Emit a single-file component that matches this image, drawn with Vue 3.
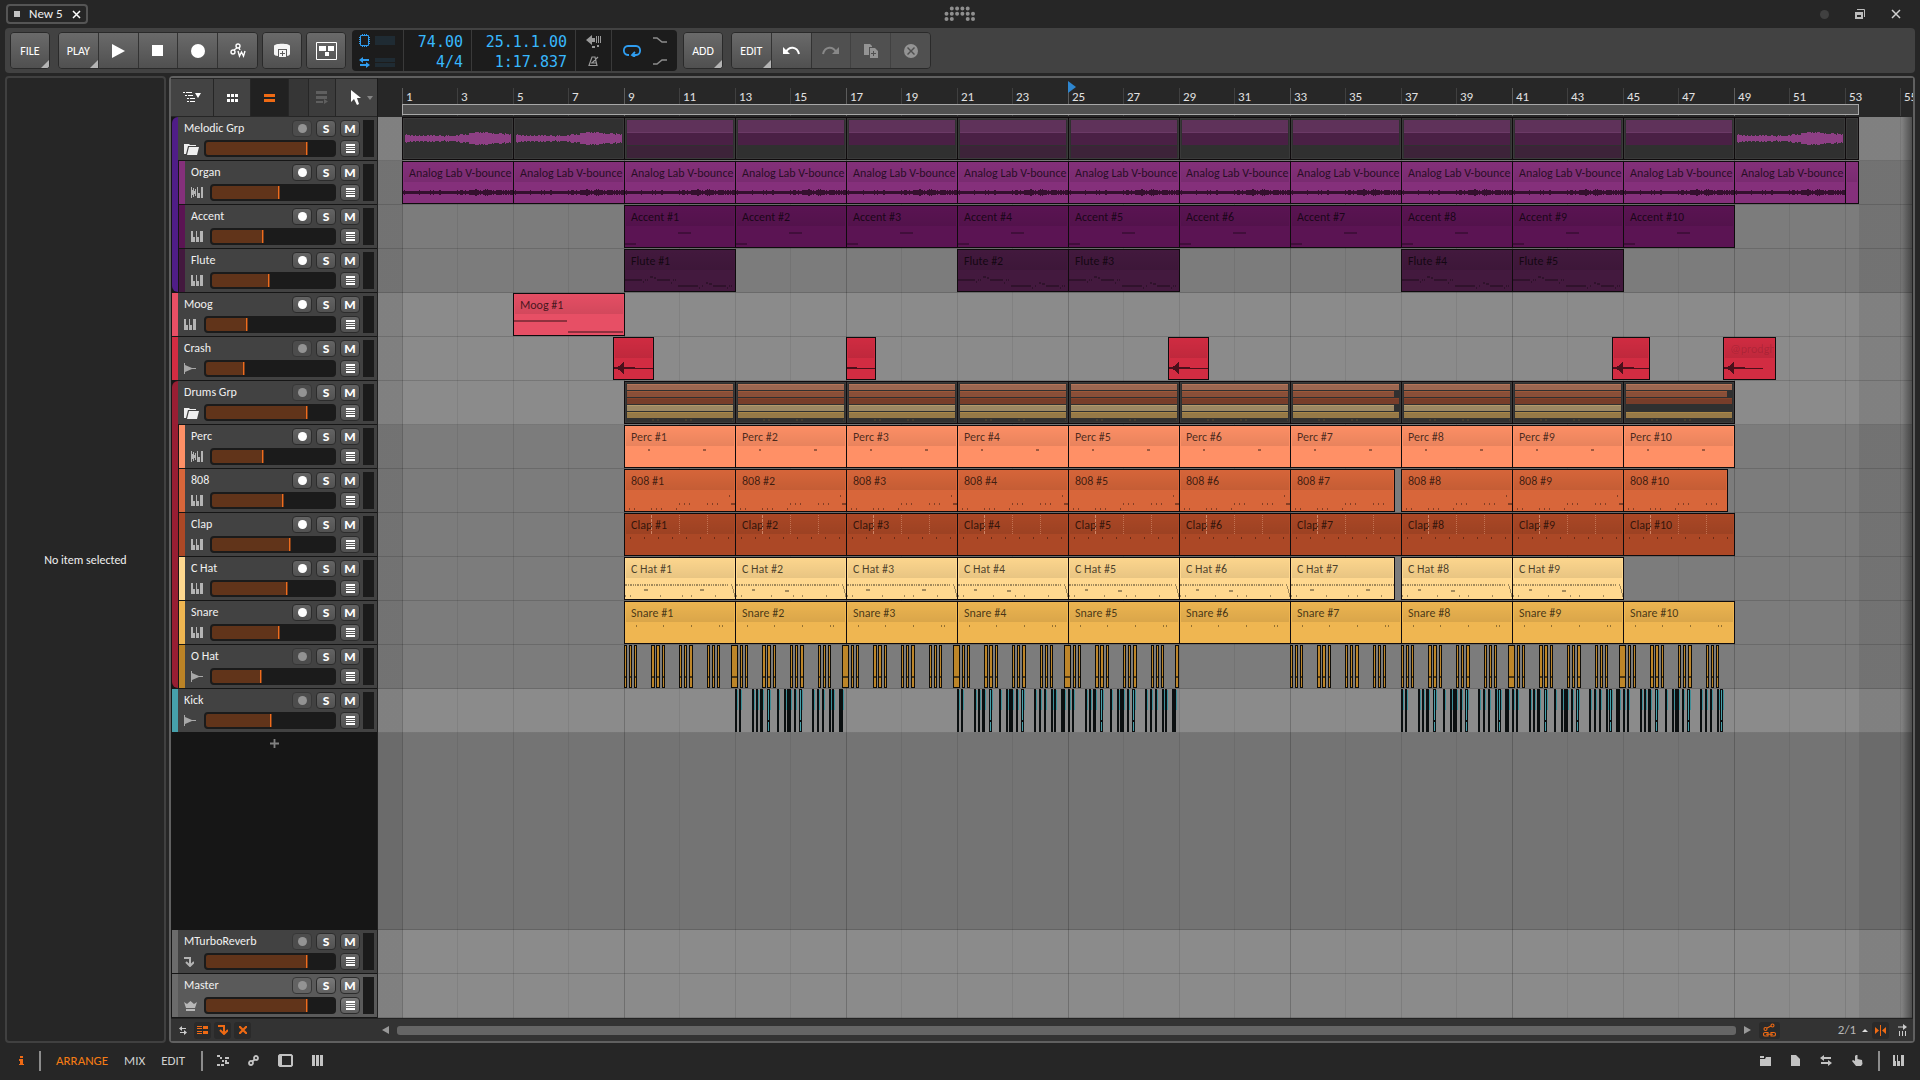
<template>
  <div class="app">
    <header class="titlebar">
      <div class="tab">
        <span class="tab-dot"></span>
        <span>New 5</span>
        <button class="plain" aria-label="Close project"><Icon name="close" /></button>
      </div>
      <Icon class="logo" name="logo" />
      <div class="window-buttons">
        <span class="win-dot"></span>
        <button class="plain" aria-label="Restore"><Icon name="restore" /></button>
        <button class="plain" aria-label="Close"><Icon name="closeThin" /></button>
      </div>
    </header>

    <nav class="toolbar">
      <div class="btn-group">
        <button class="btn corner">FILE</button>
      </div>
      <div class="btn-group five">
        <button class="btn corner">PLAY</button>
        <button class="btn" aria-label="Play"><Icon name="play" /></button>
        <button class="btn" aria-label="Stop"><Icon name="stop" /></button>
        <button class="btn" aria-label="Record"><Icon name="record" /></button>
        <button class="btn" aria-label="Automation write"><Icon name="automation" /></button>
      </div>
      <div class="btn-group tight">
        <button class="btn" aria-label="Capture"><Icon name="capture" /></button>
      </div>
      <div class="btn-group tight">
        <button class="btn" aria-label="Controls"><Icon name="panelBox" /></button>
      </div>

      <div class="display">
        <div class="cell engine">
          <Icon name="cpu" /><span class="load"></span>
          <Icon name="swapBlue" /><span class="load split"></span>
        </div>
        <div class="cell digits tempo"><span>74.00</span><span>4/4</span></div>
        <div class="cell digits position"><span>25.1.1.00</span><span>1:17.837</span></div>
        <div class="cell metro"><Icon name="preroll" /><Icon name="metronome" /></div>
        <div class="cell loop">
          <Icon name="loop" />
          <div class="punch"><Icon name="punchIn" /><Icon name="punchOut" /></div>
        </div>
      </div>

      <div class="btn-group">
        <button class="btn corner">ADD</button>
      </div>
      <div class="btn-group five">
        <button class="btn corner">EDIT</button>
        <button class="btn" aria-label="Undo"><Icon name="undo" /></button>
        <button class="btn off" aria-label="Redo"><Icon name="redo" /></button>
        <button class="btn off" aria-label="Duplicate"><Icon name="duplicate" /></button>
        <button class="btn off" aria-label="Delete"><Icon name="remove" /></button>
      </div>
    </nav>

    <main class="body">
      <aside class="inspector">No item selected</aside>

      <section class="arranger">
        <div class="row top">
          <div class="tools">
            <button class="tool list" aria-label="Track list"><Icon name="tree" /></button>
            <button class="tool cells" aria-label="Clip launcher"><Icon name="cells" /></button>
            <button class="tool active" aria-label="Arranger timeline"><Icon name="lanes" /></button>
            <span class="tool blank"></span>
            <button class="tool follow" aria-label="Follow"><Icon name="follow" /></button>
            <button class="tool pointer" aria-label="Pointer tool"><Icon name="pointer" /></button>
          </div>
          <div class="ruler">
            <span
              v-for="bar in rulerBars"
              :key="bar"
              class="tick"
              :class="{ major: bar % 8 === 1 }"
              :style="{ left: barX(bar) + 'px' }"
            >{{ bar }}</span>
            <span class="loop-range" :style="box(1, 52.5)"></span>
            <span class="playhead" :style="{ left: barX(25) + 'px' }"></span>
          </div>
        </div>

        <div
          v-for="track in tracks"
          :key="track.name"
          class="row"
          :class="[track.kind, { child: track.parent, tail: track.tail, first: track.group }]"
        >
          <div class="head">
            <span v-if="track.parent" class="strip rail" :style="{ background: track.parent }"></span>
            <div class="head-body">
              <span class="strip" :style="{ background: track.color }"></span>
              <div class="info">
                <span class="name">{{ track.name }}</span>
                <button class="mini rec" :class="{ armed: track.armed }" :aria-label="'Record ' + track.name"><i></i></button>
                <button class="mini">S</button>
                <button class="mini">M</button>
                <Icon class="type" :name="track.icon" />
                <input
                  class="volume"
                  type="range"
                  min="0"
                  max="1000"
                  :value="track.volume"
                  :aria-label="track.name + ' volume'"
                  :style="{ '--level': track.volume / 10 + '%' }"
                >
                <button class="mini" :aria-label="track.name + ' lanes'"><Icon name="menu" /></button>
              </div>
              <span class="meter"></span>
            </div>
          </div>

          <div class="lane">
            <div
              v-for="(clip, i) in track.clips"
              :key="i"
              class="clip"
              :class="clip.look"
              :style="{ ...box(clip.start, clip.length), background: clip.color || track.color }"
            >
              <span v-if="clip.label !== undefined" class="label" :class="clip.tone">{{ clip.label }}</span>
              <svg v-if="clip.art" class="art" width="111" height="41" shape-rendering="crispEdges">
                <path v-for="(shape, n) in clip.art" :key="n" :d="shape.d" :fill="shape.fill" />
              </svg>
            </div>
            <svg v-if="track.hits" class="hits" width="1460" height="43" shape-rendering="crispEdges">
              <path v-for="(shape, n) in track.hits" :key="n" :d="shape.d" :fill="shape.fill" />
            </svg>
          </div>
        </div>

        <div class="row empty">
          <div class="head"><button class="plain add-track" aria-label="Add track"><Icon name="plus" /></button></div>
          <div class="lane"></div>
        </div>

        <div v-for="track in outputs" :key="track.name" class="row" :class="track.kind">
          <div class="head">
            <div class="head-body">
              <span class="strip" :style="{ background: track.color }"></span>
              <div class="info">
                <span class="name">{{ track.name }}</span>
                <button class="mini rec" :aria-label="'Record ' + track.name"><i></i></button>
                <button class="mini">S</button>
                <button class="mini">M</button>
                <Icon class="type" :name="track.icon" />
                <input
                  class="volume"
                  type="range"
                  min="0"
                  max="1000"
                  :value="track.volume"
                  :aria-label="track.name + ' volume'"
                  :style="{ '--level': track.volume / 10 + '%' }"
                >
                <button class="mini" :aria-label="track.name + ' lanes'"><Icon name="menu" /></button>
              </div>
              <span class="meter"></span>
            </div>
          </div>
          <div class="lane"></div>
        </div>
        <span class="edge"></span>

        <footer class="scroller">
          <div class="switches">
            <button class="chip bare" aria-label="Input output"><Icon name="swap" /></button>
            <button class="chip" aria-label="Track view"><Icon name="rows" /></button>
            <button class="chip" aria-label="Effect tracks"><Icon name="send" /></button>
            <button class="chip" aria-label="Deactivated tracks"><Icon name="cross" /></button>
          </div>
          <button class="plain arrow" aria-label="Scroll left"><Icon name="left" /></button>
          <div class="scrollbar"></div>
          <button class="plain arrow" aria-label="Scroll right"><Icon name="right" /></button>
          <button class="chip wide" aria-label="Automation follow"><Icon name="link" /></button>
          <div class="grid-size">2/1 <Icon name="up" /></div>
          <button class="chip" aria-label="Snap"><Icon name="snap" /></button>
          <button class="chip bare step" aria-label="Follow playback"><Icon name="step" /></button>
        </footer>
      </section>
    </main>

    <footer class="statusbar">
      <button class="plain info-btn" aria-label="Info"><Icon name="info" /></button>
      <span class="divider"></span>
      <button class="plain view current">ARRANGE</button>
      <button class="plain view">MIX</button>
      <button class="plain view">EDIT</button>
      <span class="divider"></span>
      <div class="panels">
        <button class="plain" aria-label="Notes"><Icon name="noteEditor" /></button>
        <button class="plain" aria-label="Automation"><Icon name="nodes" /></button>
        <button class="plain" aria-label="Device"><Icon name="device" /></button>
        <button class="plain" aria-label="Mixer"><Icon name="mixer" /></button>
      </div>
      <div class="panels right">
        <button class="plain" aria-label="Browser"><Icon name="folder" /></button>
        <button class="plain" aria-label="Project"><Icon name="page" /></button>
        <button class="plain" aria-label="Mappings"><Icon name="swapWide" /></button>
        <button class="plain" aria-label="Touch"><Icon name="hand" /></button>
      </div>
      <span class="divider"></span>
      <button class="plain keys" aria-label="Keyboard"><Icon name="piano" /></button>
    </footer>
  </div>
</template>

<script setup>
import { h } from 'vue'

// [width, height, filled path, stroked path, colour, stroke width]
const icons = {
  close: [9, 9, '', 'M1 1L8 8M8 1L1 8', '#fff', 1.5],
  closeThin: [10, 10, '', 'M1 1L9 9M9 1L1 9', '#d0d0d0', 1.5],
  restore: [10, 10, 'M0 3H8V10H0ZM2 6V8H6V6Z', 'M2 .5H9.5V8', '#bdbdbd', 1],
  logo: [
    32, 16,
    [[1, 0], [2, 0], [3, 0], [4, 0], [0, 1], [1, 1], [2, 1], [3, 1], [4, 1], [5, 1], [0, 2], [1, 2], [4, 2], [5, 2]]
      .map(([c, r]) => `M${0.5 + c * 5.3} ${2.5 + r * 5.3}a2 2 0 1 0 4 0a2 2 0 1 0 -4 0`).join(''),
    '', '#8f8f8f', 0
  ],
  play: [14, 14, 'M1 0L14 7L1 14Z', '', '#fff', 0],
  stop: [11, 11, 'M0 0H11V11H0Z', '', '#fff', 0],
  record: [14, 14, 'M7 0a7 7 0 1 0 0 14a7 7 0 1 0 0-14', '', '#fff', 0],
  automation: [
    16, 15, '',
    'M1 9a2 2 0 1 0 4 0a2 2 0 1 0-4 0M6 3a2 2 0 1 0 4 0a2 2 0 1 0-4 0M4 7L7 5M9 5L10 7M8 8L9.500 13L11.500 9L13.500 13L15 8',
    '#fff', 1.4
  ],
  capture: [18, 16, 'M1 3C1 0 17 0 17 3V11C17 12 15 13 14 13V6H5V13C3 13 1 12 1 11ZM6 7H13V14H6ZM9 8V10H7V11H9V13H10V11H12V10H10V8Z', '', '#f4f4f4', 0],
  panelBox: [21, 18, 'M3 4H10V9H3ZM12 4H18V9H12ZM9 10H13V14H9Z', 'M.5 .5H20.5V17.5H.5Z', '#fff', 1],
  cpu: [11, 13, '', 'M1.500 1.500H9.500V11.500H1.500ZM3.500 0V1M5.500 0V1M7.500 0V1M3.500 12V13M5.500 12V13M7.500 12V13M0 3.500H1M0 5.500H1M0 7.500H1M0 9.500H1M10 3.500H11M10 5.500H11M10 7.500H11M10 9.500H11', '#2f9df0', 1],
  swapBlue: [11, 11, 'M4 0V6L0 3ZM7 5V11L11 8Z', 'M3 3H10M1 8H8', '#2f9df0', 2],
  preroll: [15, 13, 'M0 5L6 0V3H9V7H6V10ZM10 1H11V8H10ZM12 1H13V8H12ZM14 1H15V8H14ZM6 11H9V13H6ZM11 10H13V12H11Z', '', '#9a9a9a', 0],
  metronome: [11, 10, '', 'M4 1H7L9 9.500H1ZM3 7H8M4 7L10 1', '#9a9a9a', 1.2],
  loop: [18, 12, '', 'M6 10H5C-.5 10 -.5 1 5 1H13C18.500 1 18.500 10 13 10H9M12 7L9 10L12 12', '#2f9df0', 1.8],
  punchIn: [14, 6, '', 'M0 1H4L9 5H14', '#8c8c8c', 1.6],
  punchOut: [14, 6, '', 'M0 5H4L9 1H14', '#8c8c8c', 1.6],
  undo: [17, 9, 'M0 1L7 8H0Z', 'M3 6C6 0 14 0 16 8', '#fff', 2],
  redo: [17, 9, 'M17 1L10 8H17Z', 'M14 6C11 0 3 0 1 8', '#888', 2],
  duplicate: [14, 14, 'M0 0H6L8 2V3H5V11H0ZM6 4H11L14 7V14H6ZM9 7V9H7V10H9V12H10V10H12V9H10V7Z', '', '#949494', 0],
  remove: [14, 14, 'M7 0a7 7 0 1 0 0 14a7 7 0 1 0 0-14M4 3L7 6L10 3L11 4L8 7L11 10L10 11L7 8L4 11L3 10L6 7L3 4Z', '', '#949494', 0],
  tree: [18, 11, 'M12 1H18L15 6Z', 'M0 .5H2M3 .5H9M2 3.500H4M5 3.500H10M4 6.500H6M7 6.500H12M4 9.500H6M7 9.500H12', '#fff', 1],
  cells: [11, 8, 'M0 0H3V3H0ZM4 0H7V3H4ZM8 0H11V3H8ZM0 5H3V8H0ZM4 5H7V8H4ZM8 5H11V8H8Z', '', '#fff', 0],
  lanes: [11, 8, 'M0 0H11V3H0ZM0 5H11V8H0Z', '', '#ef6a14', 0],
  follow: [12, 13, 'M0 0H11V3H0ZM0 5H11V8H0ZM0 10H7V12H0ZM8 8L12 10.500L8 13Z', '', '#5f5f5f', 0],
  pointer: [10, 15, 'M0 0V12L3 9L6 15L8 14L6 8H10Z', '', '#fff', 0],
  menu: [9, 9, 'M0 0H9V2H0ZM0 7H9V9H0Z', 'M0 3.500H9M0 5.500H9', '#fff', 1],
  folder: [11, 10, 'M0 0H4V2H0ZM0 3H5L6 1H11V10H0Z', '', '#c3c3c3', 0],
  openFolder: [15, 12, 'M0 1H5L6 2H12V3H4L2 11H0ZM5 4H15L13 12H3Z', '', '#efefef', 0],
  keys: [12, 11, 'M0 0H2V6H4V11H0ZM5 6V0H6V6H8V11H5ZM9 6V0H12V11H9Z', '', '#b4b4b4', 0],
  hybrid: [12, 11, 'M0 0H1V11H0ZM1 3H2V8H1ZM2 1H3V10H2ZM3 4H4V7H3ZM4 2H5V9H4ZM6 0H7V6H9V11H6ZM10 0H12V11H10Z', '', '#b4b4b4', 0],
  audio: [12, 11, 'M0 0H1V11H0ZM1 2L8 5V6L1 9Z', 'M0 5.500H12', '#a8a8a8', 1],
  send: [10, 10, '', 'M0 1H6V8M2 5L6 9L10 5', '#b4b4b4', 2],
  crown: [13, 10, 'M0 1L3 3L6.500 0L10 3L13 1L11 7H2ZM2 8H11V10H2Z', '', '#b8b8b8', 0],
  plus: [9, 9, '', 'M4.500 0V9M0 4.500H9', '#808080', 1.8],
  swap: [8, 9, 'M3 0V5L0 2.500ZM5 4V9L8 6.500Z', 'M2 2.500H7M1 6.500H6', '#cfcfcf', 1],
  swapWide: [12, 11, 'M4 0V6L0 3ZM8 5V11L12 8Z', 'M3 3H11M1 8H9', '#c3c3c3', 2],
  rows: [11, 8, 'M6 0H11V3H6ZM6 5H11V8H6Z', 'M0 .5H5M0 2.500H5M0 5.500H5M0 7.500H5', '#ef6a14', 1],
  cross: [8, 8, '', 'M0 0L8 8M8 0L0 8', '#ef6a14', 2.2],
  left: [7, 8, 'M7 0V8L0 4Z', '', '#999', 0],
  right: [7, 8, 'M0 0V8L7 4Z', '', '#999', 0],
  up: [6, 3, 'M0 3L3 0L6 3Z', '', '#ddd', 0],
  link: [
    13, 14, '',
    'M1 6a1.500 1.500 0 1 0 3 0a1.500 1.500 0 1 0-3 0M8 2.500a1.500 1.500 0 1 0 3 0a1.500 1.500 0 1 0-3 0M4 5L8 3' +
    'M5 9.500H2C0 9.500 0 13 2 13H5ZM8 9.500H11C13 9.500 13 13 11 13H8ZM3 11.300H10',
    '#ef6a14', 1.1
  ],
  snap: [11, 11, 'M0 2L4 5.500L0 9ZM11 2L7 5.500L11 9Z', 'M5.500 0V11', '#ef6a14', 1],
  step: [9, 12, 'M5 0L9 3L5 6Z', 'M0 3H6M1.500 7V12M4.500 7V12M7.500 7V12', '#b8b8b8', 1],
  info: [5, 9, 'M1 0H4V2H1ZM0 3H4V8H5V9H0V8H1V5H0Z', '', '#ef6a14', 0],
  noteEditor: [12, 11, 'M0 0H3V2H0ZM3 2H5V4H3ZM8 2H12V4H8ZM5 5H7V7H5ZM8 5H10V7H8ZM8 7H12V9H8ZM0 9H3V11H0ZM4 9H7V11H4Z', '', '#c3c3c3', 0],
  nodes: [11, 11, '', 'M1 8a2 2 0 1 0 4 0a2 2 0 1 0-4 0M6 3a2 2 0 1 0 4 0a2 2 0 1 0-4 0M4 7L7 4', '#c3c3c3', 1.8],
  device: [15, 13, 'M1 1H4V12H1Z', 'M2 1H13L14 2V11L13 12H2L1 11V2Z', '#c3c3c3', 2],
  mixer: [11, 11, 'M0 0H3V11H0ZM4 0H7V11H4ZM8 0H11V11H8Z', '', '#c3c3c3', 0],
  page: [9, 11, 'M0 0H5L9 4V11H0Z', '', '#c3c3c3', 0],
  hand: [11, 11, 'M4 0H5.500V4L10 5L10.500 9L9 11H4L0 6L1 5L3 6V1Z', '', '#c3c3c3', 0],
  piano: [11, 11, 'M0 0H2V6H3V11H0ZM4 6V0H5V6H7V11H4ZM8 6V0H11V11H8Z', '', '#c3c3c3', 0]
}

function Icon({ name }) {
  const [w, hgt, fill, stroke, color, size] = icons[name]
  return h('svg', { width: w, height: hgt, viewBox: `0 0 ${w} ${hgt}`, 'aria-hidden': 'true', style: { '--ink': color } }, [
    fill ? h('path', { d: fill, fill: 'var(--tint, var(--ink))', 'fill-rule': 'evenodd' }) : null,
    stroke ? h('path', { d: stroke, fill: 'none', stroke: 'var(--tint, var(--ink))', 'stroke-width': size }) : null
  ])
}
Icon.props = ['name']

// timeline scale
const LEAD = 24
const BAR = 27.75
const barX = bar => LEAD + Math.floor((bar - 1) * BAR)
const box = (start, length) => ({
  left: barX(start) + 'px',
  width: barX(start + length) - barX(start) + 1 + 'px'
})
const rulerBars = Array.from({ length: 28 }, (_, i) => 1 + i * 2)

const rect = (x, y, w, hgt) => `M${x} ${y}h${w}v${hgt}h${-w}z`
const notes = list => list.map(([x, y, w = 1, hgt = 2]) => rect(x, y, w, hgt)).join('')

function waveform(from, to, mid, amp) {
  let d = ''
  for (let x = from; x < to; x++) {
    const noise = Math.abs(Math.sin(x * 12.9898) * 43758.5453) % 1
    const a = Math.round(amp(x, noise))
    d += rect(x, mid - a, 1, a * 2 + 1)
  }
  return d
}

const busWave = waveform(2, 108, 20, (x, n) => {
  const swell = Math.exp(-(((x - 78) / 18) ** 2)) * 3.4
  const start = Math.max(0, 1.6 - x / 10)
  const end = x > 95 ? 1 : 0
  return 1.3 + swell + start + end + n * 1.8
})
const organWave = waveform(0, 111, 30, (x, n) => (x > 62 && x < 90 ? 1.2 + n * 1.6 : x > 50 ? 1.1 + n * 0.7 : 0.7 + n * 0.9))

const ink = 'rgba(0,0,0,.38)'
const faint = 'rgba(0,0,0,.28)'
const art = {
  organ: [{ d: organWave, fill: '#35102f' }],
  accent: [{ d: notes([[0, 37, 11], [53, 26, 13]]), fill: faint }],
  flute: [{
    d: notes([
      [0, 29, 17], [18, 31], [20, 29], [22, 29], [25, 26, 3], [29, 27, 2], [32, 29, 13], [46, 32], [48, 29], [50, 29],
      [53, 35, 20], [74, 37], [77, 35], [81, 32, 2], [84, 33, 3], [88, 35, 13], [102, 37], [104, 35], [106, 35]
    ]),
    fill: faint
  }],
  moog: [{ d: notes([[0, 26, 53], [54, 37, 55]]), fill: ink }],
  perc: [{ d: notes([[23, 23, 2], [78, 23, 3]]), fill: ink }],
  bass: [{
    d: notes([
      [104, 25], [54, 33], [59, 33], [64, 33], [82, 33], [87, 33], [92, 33], [106, 33, 4],
      [4, 38], [9, 38], [26, 38], [31, 38], [36, 38], [51, 38]
    ]),
    fill: ink
  }],
  clap: [
    { d: notes([5, 19, 33, 47, 61, 75, 89, 103].map(x => [x, 23])), fill: ink },
    { d: notes([1, 5, 9, 13, 17].map(y => [26, y, 1, 3])), fill: 'rgba(255,200,170,.5)' },
    { d: notes([1, 3, 5, 7, 9, 11, 13, 15, 17, 19].flatMap(y => [[54, y, 1, 1], [82, y, 1, 1]])), fill: 'rgba(255,200,170,.35)' }
  ],
  snare: [{ d: notes([11, 38, 66, 94, 97].map(x => [x, 23])), fill: ink }]
}
// the top line is a run of sixteenths
const hatArt = odd => [{
  d: notes([
    ...Array.from({ length: 60 }, (_, i) => [Math.floor(i * BAR / 16), 26]),
    ...(odd ? [[19, 31, 4], [75, 31, 4]] : [[16, 31, 3], [49, 32, 4]]),
    ...[0, 5, 35, 57, 66, 90].map(x => [x, 37]),
    [106, 26], [107, 28, 1, 3], [108, 31, 1, 4], [109, 35, 1, 4]
  ]),
  fill: 'rgba(0,0,0,.36)'
}]

// every fourth bar from `from` to `to`
const steps = (from, to) => Array.from({ length: (to - from) / 4 + 1 }, (_, i) => from + i * 4)
const series = (name, bars, draw, shorten = {}) =>
  bars.map((start, i) => ({
    start,
    length: shorten[i + 1] || 4,
    label: `${name} #${i + 1}`,
    art: typeof draw === 'function' ? draw(i + 1) : draw
  }))

const melodicClips = steps(1, 49).map(start => {
  const bare = start < 9 || start > 45
  const flute = [9, 21, 25, 37, 41].includes(start)
  return {
    start,
    length: 4,
    look: 'folded',
    color: '#303030',
    art: bare
      ? [{ d: busWave, fill: '#8d3f84' }]
      : [
          { d: rect(2, 2, 106, 12), fill: '#5f325a' },
          { d: rect(2, 14, 106, 1), fill: '#6b3a66' },
          { d: rect(2, 15, 106, 12), fill: '#4a2045' },
          { d: flute ? rect(2, 28, 106, 12) : '', fill: '#3d2339' }
        ]
  }
})
melodicClips.push({ start: 53, length: 0.5, look: 'folded', color: '#303030' })

const drumClips = steps(9, 45).map(start => {
  const cut = start === 33 || start === 45 ? 101 : 106
  const bands = [
    ['#9c6751', '#b67558', 106], ['#8a4f38', '#9c5839', cut], ['#773d2a', '#854329', 106],
    ['#9c8763', '#b39a6d', start === 33 ? 101 : 106], ['#967947', '#a98748', 106]
  ]
  const shapes = bands.flatMap(([fill, top, w], i) =>
    start === 45 && i === 3 ? [] : [{ d: rect(2, 2 + i * 7, w, 6), fill }, { d: rect(2, 2 + i * 7, w, 1), fill: top }]
  )
  shapes.push({ d: notes([[27, 37, 2], [32, 37, 2], [60, 37, 2], [65, 37, 2], [107, 37]]), fill: '#443d30' })
  return { start, length: 4, look: 'folded', color: '#303030', art: shapes }
})

const crashClips = [[8.62, 1.46], [17, 1.05], [28.62, 1.46], [44.62, 1.35], [48.62, 1.89]].map(([start, length], i) => ({
  start,
  length,
  label: i === 4 ? '@prodgh' : '',
  tone: i === 4 ? 'ghost' : '',
  art: [{
    d: rect(0, 30, i === 4 ? 39 : 60, 1) + rect(0, 29, i === 1 ? 10 : 21, 2) + (i === 1 ? '' : 'M2 30L8 26L9 24H10V36H9L8 34Z'),
    fill: '#4b101b'
  }]
}))

// one-shot samples: outlined slivers painted on the lane
const hatSteps = [[5, 3], [10, 3], [27, 4], [32, 4], [38, 3], [55, 3], [60, 3], [65, 4], [83, 3], [88, 3], [93, 3]]
const hatHits = []
for (const bar of [...steps(9, 25), ...steps(33, 45)]) {
  const x = barX(bar)
  hatHits.push([x, 3], ...hatSteps.map(([dx, w]) => [x + dx, w]))
  if (![25, 33, 45].includes(bar)) hatHits.push([x + 107, 6])
  if (bar === 25) hatHits.push([x + 107, 4])
}
const kickSteps = [
  [0, 2], [4, 2], [17, 2], [21, 2], [25, 3], [32, 3, 1], [42, 2], [49, 2], [52, 4], [59, 2],
  [64, 3, 1], [77, 2], [82, 2], [87, 2], [94, 2], [97, 2], [104, 4]
]
const kickHits = [13, 21, 25, 37, 41, 45].flatMap(bar =>
  kickSteps
    .filter(([dx]) => bar !== 45 || dx < 104)
    .map(([dx, w, open]) => [barX(bar) + dx, bar > 30 && dx === 97 ? 3 : w, open || (bar > 30 && dx === 97)])
)
const hatDrawing = [
  { d: hatHits.map(([x, w]) => rect(x, 0, w, 43)).join(''), fill: '#0e0c08' },
  { d: hatHits.map(([x, w]) => rect(x + 1, 1, w - 2, 41)).join(''), fill: '#bd8528' },
  { d: hatHits.map(([x, w]) => rect(x + 1, 31, w - 2, 2)).join(''), fill: '#4c3715' }
]
const kickDrawing = [
  { d: kickHits.map(([x, w]) => rect(x + w, 1, 1, 20)).join(''), fill: '#3d8e97' },
  { d: kickHits.map(([x, w]) => rect(x, 0, w, 43)).join(''), fill: '#0b0f10' },
  { d: kickHits.filter(k => k[2]).map(([x, w]) => rect(x + 1, 1, w - 2, 30) + rect(x + 1, 33, w - 2, 9)).join(''), fill: '#46a0aa' }
]

const PURPLE = '#4f1d87'
const RED = '#981e33'
const ten = steps(9, 45)

const tracks = [
  { name: 'Melodic Grp', color: PURPLE, icon: 'openFolder', volume: 797, group: true, clips: melodicClips },
  {
    name: 'Organ', color: '#85307b', parent: PURPLE, icon: 'hybrid', volume: 558, armed: true,
    clips: [
      ...steps(1, 49).map(start => ({ start, length: 4, label: 'Analog Lab V-bounce', art: art.organ })),
      { start: 53, length: 0.5, label: '' }
    ]
  },
  { name: 'Accent', color: '#5b1453', parent: PURPLE, icon: 'keys', volume: 428, armed: true, clips: series('Accent', ten, art.accent) },
  { name: 'Flute', color: '#43193e', parent: PURPLE, tail: true, icon: 'keys', volume: 477, armed: true, clips: series('Flute', [9, 21, 25, 37, 41], art.flute) },
  { name: 'Moog', color: '#e74f65', icon: 'keys', volume: 326, armed: true, clips: series('Moog', [5], art.moog) },
  { name: 'Crash', color: '#d22c42', icon: 'audio', volume: 303, clips: crashClips },
  { name: 'Drums Grp', color: RED, icon: 'openFolder', volume: 797, group: true, clips: drumClips },
  { name: 'Perc', color: '#ff9066', parent: RED, icon: 'hybrid', volume: 428, armed: true, clips: series('Perc', ten, art.perc) },
  { name: '808', color: '#d8663a', parent: RED, icon: 'keys', volume: 590, armed: true, clips: series('808', ten, art.bass, { 7: 3.76, 10: 3.76 }) },
  { name: 'Clap', color: '#ac4826', parent: RED, icon: 'keys', volume: 648, armed: true, clips: series('Clap', ten, art.clap) },
  {
    name: 'C Hat', color: '#ffd88f', parent: RED, icon: 'keys', volume: 623, armed: true,
    clips: series('C Hat', steps(9, 41), n => hatArt([1, 3, 7].includes(n)), { 7: 3.76 })
  },
  { name: 'Snare', color: '#efb651', parent: RED, icon: 'keys', volume: 558, armed: true, clips: series('Snare', ten, art.snare) },
  { name: 'O Hat', color: '#bb8326', parent: RED, tail: true, icon: 'audio', volume: 412, hits: hatDrawing },
  { name: 'Kick', color: '#46a0aa', icon: 'audio', volume: 512, hits: kickDrawing }
]

const outputs = [
  { name: 'MTurboReverb', color: '#6b6b6b', icon: 'send', volume: 797 },
  { name: 'Master', color: '#6b6b6b', icon: 'crown', volume: 797, kind: 'master' }
]
</script>

<style scoped>
.app {
  display: flex;
  flex-direction: column;
  min-height: 100vh;
  background: #262626;
  color: #e6e6e6;
  font: 12px/16px Carlito, Lato, sans-serif;
}

svg {
  display: block;
  flex: none;
}

button {
  font: inherit;
  color: inherit;
  cursor: pointer;
}

.plain {
  display: flex;
  align-items: center;
  justify-content: center;
  padding: 0;
  border: 0;
  background: none;
}

/* title bar */
.titlebar {
  display: grid;
  grid-template-columns: 1fr auto 1fr;
  align-items: center;
  height: 28px;
  padding: 0 6px;
}

.tab {
  display: flex;
  align-items: center;
  justify-self: start;
  gap: 9px;
  height: 16px;
  padding: 0 5px 0 6px;
  border: 2px solid #555;
  border-radius: 4px;
  color: #f0f0f0;
  font-size: 13px;
}

.tab-dot {
  width: 6px;
  height: 6px;
  background: #c4c4c4;
}

.window-buttons {
  display: flex;
  align-items: center;
  justify-self: end;
  gap: 26px;
  margin-right: 13px;
}

.win-dot {
  width: 9px;
  height: 9px;
  border-radius: 50%;
  background: #404040;
}

/* main toolbar */
.toolbar {
  display: flex;
  align-items: center;
  gap: 8px;
  height: 45px;
  margin: 0 5px;
  padding: 0 5px;
  border-radius: 4px;
  background: #424242;
}

.btn-group {
  display: flex;
  width: 40px;
  height: 37px;
  box-sizing: border-box;
  border: 1px solid #2a2a2a;
  border-radius: 4px;
  overflow: hidden;
}

.btn-group.five {
  width: 200px;
}

.btn-group.tight {
  margin-left: -4px;
}

.btn {
  position: relative;
  display: flex;
  flex: 1;
  align-items: center;
  justify-content: center;
  padding: 0;
  border: 0;
  border-right: 1px solid #333;
  background: linear-gradient(#6a6a6a, #505050);
  color: #fff;
}

.btn:last-child {
  border-right: 0;
}

.btn.off {
  background: #505050;
  border-right-color: #414141;
}

.btn.corner::after {
  content: "";
  position: absolute;
  right: 0;
  bottom: 0;
  border: 4px solid transparent;
  border-right-color: #b4b4b4;
  border-bottom-color: #b4b4b4;
}

.display {
  display: flex;
  height: 41px;
  margin-left: -2px;
  margin-right: -2px;
  border-radius: 4px;
  background: #1c1c1c;
}

.cell {
  border-left: 1px solid #3a3a3a;
}

.cell:first-child {
  border-left: 0;
}

.engine {
  display: grid;
  grid-template-columns: 11px 20px;
  gap: 10px 5px;
  align-content: center;
  align-items: center;
  padding: 0 8px 0 7px;
}

.load {
  height: 9px;
  background: #1f2b33;
}

.load.split {
  background: linear-gradient(#1f2b33 4px, #1c1c1c 4px, #1c1c1c 5px, #1f2b33 5px);
}

.digits {
  display: flex;
  flex-direction: column;
  justify-content: center;
  align-items: flex-end;
  padding: 2px 8px 0 0;
  color: #38b8fd;
  font: 15px/20px "DejaVu Sans Mono", monospace;
}

.tempo {
  width: 59px;
}

.position {
  width: 95px;
}

.metro {
  display: flex;
  flex-direction: column;
  align-items: center;
  justify-content: center;
  gap: 8px;
  width: 35px;
}

.loop {
  display: flex;
  align-items: center;
  gap: 12px;
  padding: 0 10px 0 11px;
}

.punch {
  display: flex;
  flex-direction: column;
  gap: 16px;
}

/* body */
.body {
  display: flex;
  flex: 1;
  gap: 3px;
  margin: 3px 5px 0;
}

.inspector {
  display: flex;
  align-items: center;
  justify-content: center;
  width: 157px;
  border: 2px solid #404040;
  border-radius: 4px;
  color: #f0f0f0;
}

.arranger {
  position: relative;
  display: flex;
  flex: 1;
  flex-direction: column;
  min-width: 0;
  border: 2px solid #606060;
  border-radius: 4px;
  background: #161616;
}

.row {
  display: flex;
  height: 44px;
}

.row.top {
  height: 39px;
}

.tools {
  display: flex;
  gap: 1px;
  width: 206px;
  padding: 1px 0;
  border-right: 1px solid #1a1a1a;
  background: #262626;
}

.tool {
  display: flex;
  align-items: center;
  justify-content: center;
  padding: 0;
  border: 0;
  background: #434343;
}

.tool.list { width: 42px; }
.tool.cells { width: 36px; }
.tool.active { width: 37px; background: #212121; }
.tool.blank { width: 19px; background: #363636; }
.tool.follow { width: 26px; background: #3c3c3c; }

.tool.pointer {
  flex: 1;
  gap: 6px;
  padding-left: 10px;
}

.tool.pointer::after {
  content: "";
  border: 3px solid transparent;
  border-top: 4px solid #858585;
  border-bottom: 0;
}

.ruler {
  position: relative;
  flex: 1;
  overflow: hidden;
  background: #272727;
}

.tick {
  position: absolute;
  top: 10px;
  bottom: 1px;
  padding-left: 3px;
  border-left: 1px solid #404040;
  color: #e2e2e2;
  font-size: 13px;
  line-height: 18px;
}

.tick.major {
  border-left-color: #5c5c5c;
}

.loop-range {
  position: absolute;
  top: 26px;
  height: 11px;
  box-sizing: border-box;
  border: 1px solid #a8a8a8;
  background: #505050;
}

.playhead {
  position: absolute;
  top: 3px;
  border: 6px solid transparent;
  border-left: 8px solid #2e86cf;
  border-right: 0;
}

/* track headers */
.head {
  display: flex;
  width: 205px;
  padding-left: 1px;
  border-right: 1px solid #202020;
}

.head-body {
  display: flex;
  flex: 1;
  min-width: 0;
  height: 43px;
  border-bottom: 1px solid #161616;
  background: #424242;
}

.strip {
  width: 6px;
}

.rail {
  margin-right: 1px;
}

.tail .rail {
  border-bottom-left-radius: 6px;
  height: 43px;
}

.first .head-body {
  background: linear-gradient(90deg, #161616 6px, #424242 6px);
}

.first .strip {
  height: 44px;
  border-top-left-radius: 6px;
}

.info {
  display: grid;
  flex: 1;
  grid-template-columns: 16px 1fr 20px 20px 20px;
  grid-template-rows: 17px 17px;
  gap: 3px 4px;
  padding: 3px 3px 3px 6px;
  min-width: 0;
}

.child .info {
  grid-template-columns: 15px 1fr 20px 20px 20px;
}

.name {
  grid-column: 1 / 3;
  line-height: 17px;
  color: #f0f0f0;
  white-space: nowrap;
}

.type {
  align-self: center;
}

.mini {
  display: flex;
  align-items: center;
  justify-content: center;
  padding: 0;
  border: 1px solid #2c2c2c;
  border-radius: 4px;
  background: linear-gradient(#646464, #525252);
  color: #fff;
  font: 900 12px/14px Lato, sans-serif;
}

.rec {
  background: #4c4c4c;
  border-color: #373737;
}

.rec i {
  width: 9px;
  height: 9px;
  border-radius: 50%;
  background: #939393;
}

.rec.armed {
  background: linear-gradient(#646464, #525252);
  border-color: #2c2c2c;
}

.rec.armed i {
  background: #fff;
}

.volume {
  grid-column: 2 / 5;
  width: 100%;
  height: 17px;
  margin: 0;
  border: 2px solid #1b1b1b;
  border-radius: 4px;
  box-sizing: border-box;
  appearance: none;
  background: linear-gradient(
    90deg,
    #61341a calc(var(--level) - 2px),
    #ee6c1d calc(var(--level) - 2px) calc(var(--level) - 1px),
    #7c3e1a calc(var(--level) - 1px) var(--level),
    #1b1b1b var(--level)
  );
}

.volume::-webkit-slider-thumb {
  appearance: none;
  width: 1px;
  height: 13px;
}

.meter {
  width: 11px;
  height: 37px;
  margin: 3px 3px 0 0;
  background: #1b1b1b;
}

.master .head-body {
  background: #5a5a5a;
}

.master .mini {
  background: linear-gradient(#7a7a7a, #606060);
}

.master .rec {
  background: #636363;
}

/* lanes: one background tile holds eight bars of grid lines */
.lane {
  --base: #8b8b8b;
  position: relative;
  flex: 1;
  min-width: 0;
  overflow: hidden;
  background:
    linear-gradient(90deg, rgba(0, 0, 0, .08) 24px, transparent 24px, transparent 1481px, rgba(0, 0, 0, .08) 1481px),
    linear-gradient(rgba(0, 0, 0, .15), rgba(0, 0, 0, .15)) 0 100% / 100% 1px no-repeat,
    linear-gradient(
      90deg,
      rgba(0, 0, 0, .2) 1px, transparent 1px 55px,
      rgba(0, 0, 0, .07) 55px 56px, transparent 56px 111px,
      rgba(0, 0, 0, .1) 111px 112px, transparent 112px 166px,
      rgba(0, 0, 0, .07) 166px 167px, transparent 167px
    ) 24px 0 / 222px 100%,
    var(--base);
}

.child .lane {
  --base: #7c7c7c;
}

.empty {
  flex: 1;
  height: auto;
}

.empty .head {
  align-items: flex-start;
  justify-content: center;
}

.add-track {
  margin-top: 6px;
}

.empty .lane {
  --base: #747474;
}

.clip {
  position: absolute;
  top: 0;
  height: 43px;
  box-sizing: border-box;
  overflow: hidden;
  border: 1px solid #0f0b0d;
}

.folded {
  box-shadow: inset 0 0 0 1px #3a3a3a;
}

.label {
  display: block;
  height: 20px;
  margin: 0 1px;
  padding-left: 5px;
  overflow: hidden;
  background: linear-gradient(rgba(0, 0, 0, .01), rgba(0, 0, 0, .09));
  color: rgba(0, 0, 0, .7);
  line-height: 23px;
  white-space: nowrap;
}

.label.ghost {
  color: rgba(0, 0, 0, .14);
}

.art,
.hits {
  position: absolute;
  top: 0;
  left: 0;
}

.edge {
  position: absolute;
  top: 39px;
  right: 0;
  bottom: 23px;
  width: 10px;
  border-right: 1px solid #222;
  background: linear-gradient(90deg, transparent, rgba(0, 0, 0, .4));
}

.scroller {
  display: flex;
  align-items: center;
  height: 22px;
  padding-right: 2px;
  border-top: 1px solid #222;
  background: #333;
}

.switches {
  display: flex;
  gap: 3px;
  width: 206px;
  box-sizing: border-box;
  padding-left: 3px;
}

.chip {
  display: flex;
  align-items: center;
  justify-content: center;
  width: 17px;
  height: 17px;
  padding: 0;
  border: 0;
  border-radius: 3px;
  background: #2a2a2a;
  --tint: #ef6a14;
}

.chip.bare {
  background: none;
  --tint: #cdcdcd;
}

.chip.wide {
  width: 21px;
  margin-left: 3px;
}

.chip.step {
  margin-left: 5px;
}

.arrow {
  width: 16px;
}

.scrollbar {
  flex: 1;
  height: 9px;
  margin: 0 4px;
  border-radius: 3px;
  background: #656565;
}

.grid-size {
  display: flex;
  align-items: center;
  gap: 6px;
  margin: 0 4px 0 58px;
  color: #b8b8b8;
  font-size: 13px;
}

/* status bar */
.statusbar {
  display: flex;
  align-items: center;
  height: 35px;
  padding: 0 16px 2px 19px;
}

.divider {
  width: 2px;
  height: 20px;
  margin: 0 15px;
  background: #8c8c8c;
}

.view {
  margin-right: 16px;
  color: #cfcfcf;
  font-size: 13px;
}

.view + .divider {
  margin-left: 0;
  margin-right: 14px;
}

.current {
  color: #f57c14;
}

.panels {
  display: flex;
  align-items: center;
  gap: 19px;
}

.panels.right {
  gap: 20px;
  margin-left: auto;
}

.keys {
  margin-left: -2px;
}
</style>

<style>
html {
  background: #262626;
}
</style>
